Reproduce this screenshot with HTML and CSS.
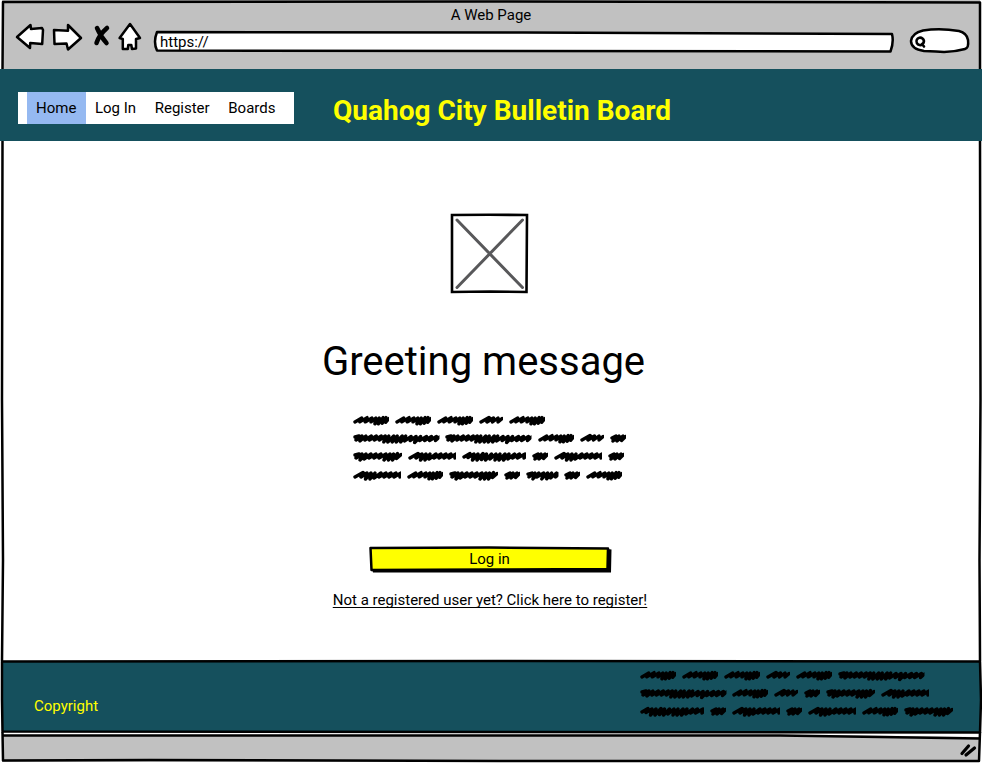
FILE: index.html
```
<!DOCTYPE html>
<html lang="en">
<head>
<meta charset="utf-8">
<title>Quahog City Bulletin Board</title>
<link rel="stylesheet" href="styles.css">
</head>
<body>
<svg class="defs" aria-hidden="true">
  <symbol id="a" viewBox="0 0 37 14"><path d="M2 9l7-4-2 4 7.500-4.500-2 4.500 7-4-1 4 5-4-1 6 4.500-6-1 6 5-6.500-1 6 4-6-.5 5 3.500-4"/></symbol>
  <symbol id="b" viewBox="0 0 24 14"><path d="M2 9l8-4.500 1 1-3 3.500 6.500-4-1 4 5.500-4 0 4 4-3.500"/></symbol>
  <symbol id="c" viewBox="0 0 87 14"><path d="M2 6l4-1-3 4 6-4-2 5 6-5-1 4 6.500-4-2 4 7-4-2 4 7-4-2 4 6-4-1.500 6 5-6-1 6 6-6-1.500 6 5-6-1 6 6-6-1.500 6 5-6-1 5 6.500-4.500-1 4 6-4-1.500 6 6-6-1 4 7-4-2 4 7-4-2 4 7-4-1 4 4-3.500"/></symbol>
  <symbol id="d" viewBox="0 0 16 14"><path d="M2 7l4-2-3 5 6-5-2 5 6-5-1.500 4.500 4-4"/></symbol>
  <symbol id="e" viewBox="0 0 49 14"><path d="M2 6l4-1-3 4 6-4-2 6 6-6-2 5 7-5-2 4 7-4-2 4 7-4-2 4 7-4-2 6 6-6-1.500 6 5-6-1 6 5-6.500-1 5 4.500-4"/></symbol>
  <symbol id="f" viewBox="0 0 48 14"><path d="M2 9l8-4.500 1 1-3 3.500 6-4-1.500 6 5.500-6-1 6 5-6-1 5 7-5-2 4 7-4-2 4 7-4-2 4 7-4-2 4 7-4-1 4 4-3"/></symbol>
  <symbol id="g" viewBox="0 0 64 14"><path d="M2 8l6-3.500-2 4 6-3.500-1.500 6 5.500-6-1 6 6-6.500-1.500 6 5-5.500-1 6 6-6-1.500 5 6-5-1 6 5-6-1 6 6-6-1.500 6 5.500-6-1 5 6.500-5-2 4 7-4-2 4 7.500-4-1 4 4-3.500"/></symbol>
  <symbol id="h" viewBox="0 0 33 14"><path d="M2 6l4-1-3 4 6-4-2 6 6-6-2 4 7-4-2 6 6-6-1 6 5-6-1 5 6-5-1 4 4-3.500"/></symbol>
</svg>

<div class="window">
  <header class="chrome">
    <div class="chrome-title">A Web Page</div>
    <div class="toolbar">
      <svg class="tools" viewBox="0 0 130 34">
        <path class="key" d="M2 17L15.500 5l.5 4 11-1 1 2-.8 14-12-1-.2 5zM39 10l14 .8L53 5l13 13-13 11.500-1.500-6-12 .5z"/>
        <path class="key" d="M115 4L125 18l-4 1 0 9.500-4 .5-.7-4-3 0-.5 4-5 0 0-10-3.200-1z"/>
        <path class="close" d="M82 8Q86 17 91.500 23M92 8Q84 15 81.500 23"/>
      </svg>
      <div class="address">
        <svg viewBox="0 0 742 24" preserveAspectRatio="none"><path d="M4 2L370 2.500 739 4Q741 12 737.500 21.500L4 20.500Q0 12 4 2z"/></svg>
        <span>https://</span>
      </div>
      <svg class="search" viewBox="0 0 62 28"><path class="key" d="M14 3.500Q31 1 50 4q8 2 9 9 1 8-3 9-14 4-29 2.500L15 24Q2 22 2 14 3 6 14 3.500z"/><path class="glass" d="M13.500 11.500a3.700 3.700 0 1 0-3 6.500 3.700 3.700 0 0 0 3-6.500M13 17L15 19.500"/></svg>
    </div>
  </header>

  <div class="banner">
    <nav>
      <a class="active">Home</a><a>Log In</a><a>Register</a><a>Boards</a>
    </nav>
    <h1>Quahog City Bulletin Board</h1>
  </div>

  <main>
    <svg class="picture" viewBox="0 0 78 80"><path class="edge" d="M2 2L39 1.800l38 .2-.5 77L40 78.500 2 79z"/><path class="cross" d="M7 7L72.500 74.500M72.500 7L7 74.500"/></svg>
    <h2>Greeting message</h2>
    <div class="scribble">
      <div><svg class="a"><use href="#a"/></svg><svg class="a"><use href="#a"/></svg><svg class="a"><use href="#a"/></svg><svg class="b"><use href="#b"/></svg><svg class="a"><use href="#a"/></svg></div>
      <div><svg class="c"><use href="#c"/></svg><svg class="c"><use href="#c"/></svg><svg class="a"><use href="#a"/></svg><svg class="b"><use href="#b"/></svg><svg class="d"><use href="#d"/></svg></div>
      <div><svg class="e"><use href="#e"/></svg><svg class="f"><use href="#f"/></svg><svg class="g"><use href="#g"/></svg><svg class="d"><use href="#d"/></svg><svg class="f"><use href="#f"/></svg><svg class="d"><use href="#d"/></svg></div>
      <div><svg class="f"><use href="#f"/></svg><svg class="a"><use href="#a"/></svg><svg class="e"><use href="#e"/></svg><svg class="d"><use href="#d"/></svg><svg class="h"><use href="#h"/></svg><svg class="d"><use href="#d"/></svg><svg class="a"><use href="#a"/></svg></div>
    </div>
    <button class="login">
      <svg viewBox="0 0 243 28"><path class="shade" d="M3 23L239 22 239 3 242.500 3.500 242 26.500 4 26.500z"/><path class="face" d="M1.500 2L120 1.500 239 2.500 238.500 23 120 23.500 2.500 24z"/></svg>
      <span>Log in</span>
    </button>
    <a class="register">Not a registered user yet? Click here to register!</a>
  </main>

  <footer>
    <span>Copyright</span>
    <div class="scribble">
      <div><svg class="a"><use href="#a"/></svg><svg class="a"><use href="#a"/></svg><svg class="a"><use href="#a"/></svg><svg class="b"><use href="#b"/></svg><svg class="a"><use href="#a"/></svg><svg class="c"><use href="#c"/></svg></div>
      <div><svg class="c"><use href="#c"/></svg><svg class="a"><use href="#a"/></svg><svg class="b"><use href="#b"/></svg><svg class="d"><use href="#d"/></svg><svg class="e"><use href="#e"/></svg><svg class="f"><use href="#f"/></svg></div>
      <div><svg class="g"><use href="#g"/></svg><svg class="d"><use href="#d"/></svg><svg class="f"><use href="#f"/></svg><svg class="d"><use href="#d"/></svg><svg class="f"><use href="#f"/></svg><svg class="a"><use href="#a"/></svg><svg class="e"><use href="#e"/></svg></div>
    </div>
  </footer>
  <div class="status"></div>

  <svg class="frame" viewBox="0 0 982 763">
    <path class="gap" d="M790 734.500L979 734.500 979 737z"/>
    <path d="M2.500 69L3 2 490 1.500 980 2.500 980 69M2.500 141L2 400 3 560 2 661M980 141L980.500 400 979.500 560 980 661"/>
    <path d="M2 661.500L500 661 980 661.500 981 700 980 732.500 500 732 2.500 731.500 2 700z"/>
    <path d="M2.500 732L3 760.500 150 760 500 761 979 761 980 732M3 735.500L500 735.500 780 735.500 980 738.500"/>
    <path class="grip" d="M962 753.500L968.500 746M966 755L974.500 748"/>
  </svg>
</div>
</body>
</html>
```
FILE: styles.css
```
* { box-sizing: border-box; }
body { margin: 0; background: #fff; font: 15px/18px Roboto, sans-serif; color: #000; }
svg { display: block; flex: none; overflow: visible; }
.defs { position: absolute; width: 0; height: 0; }
.window { position: relative; width: 982px; height: 763px; display: flex; flex-direction: column; overflow: hidden; }
.frame { position: absolute; inset: 0; width: 982px; height: 763px; pointer-events: none; fill: none; stroke: #000; stroke-width: 2.5; stroke-linejoin: round; }
.frame .gap { fill: #fff; stroke: none; }
.frame .grip { stroke-width: 3.2; stroke-linecap: round; }

.chrome { height: 69px; margin: 0 2px; padding-top: 6px; background: #c1c1c1; }
.chrome-title { text-align: center; }
.toolbar { display: flex; padding-left: 13px; }
.tools { width: 130px; height: 34px; margin-top: -4px; }
.key { fill: #fff; stroke: #000; stroke-width: 2.5; stroke-linejoin: round; }
.close { fill: none; stroke: #000; stroke-width: 4.5; stroke-linecap: round; }
.address { position: relative; width: 742px; height: 24px; margin: 6px 0 0 8px; padding: 3px 7px; }
.address svg { position: absolute; inset: 0; width: 742px; height: 24px; fill: #fff; stroke: #000; stroke-width: 2.5; stroke-linejoin: round; }
.address span { position: relative; }
.search { width: 62px; height: 28px; margin: 3px 0 0 14px; }
.glass { fill: none; stroke: #000; stroke-width: 2.6; stroke-linecap: round; }

.banner { height: 72px; background: #15505d; display: flex; align-items: flex-start; padding: 23px 0 0 18px; }
nav { display: flex; width: 276px; height: 32px; padding-left: 9px; background: #fff; }
nav a { padding: 7px 9.6px 7px 9px; white-space: nowrap; }
nav .active { background: #95b9f1; }
h1 { margin: 2px 0 0 39px; font-size: 28px; line-height: 34px; font-weight: 700; color: #ff0; white-space: nowrap; }

main { height: 520px; display: flex; flex-direction: column; align-items: center; padding-top: 72px; }
.picture { width: 78px; height: 80px; margin-right: 4px; }
.edge { fill: #fff; stroke: #000; stroke-width: 2.6; }
.cross { stroke: #58585a; stroke-width: 3; stroke-linecap: round; }
h2 { margin: 45px 15px 0 0; font-size: 40px; line-height: 48px; font-weight: 400; white-space: nowrap; }
.scribble { display: flex; flex-direction: column; gap: 4.2px; }
.scribble div { display: flex; gap: 6px; height: 14px; }
.scribble svg { height: 14px; fill: none; stroke: #000; stroke-width: 3.4; stroke-linecap: round; stroke-linejoin: round; }
main .scribble { width: 277px; margin-top: 27px; }
.scribble .a { width: 36px; }
.scribble .b { width: 24px; }
.scribble .c { width: 86.5px; }
.scribble .d { width: 16px; }
.scribble .e { width: 49px; }
.scribble .f { width: 48px; }
.scribble .g { width: 64px; }
.scribble .h { width: 32.5px; }
.login { position: relative; width: 243px; height: 28px; margin: 64px 1px 0 0; padding: 0 2px 2px 0; border: 0; background: none; font: inherit; color: #000; }
.login svg { position: absolute; inset: 0; width: 243px; height: 28px; }
.login span { position: relative; }
.shade { fill: #000; }
.face { fill: #ff0; stroke: #000; stroke-width: 2.5; stroke-linejoin: round; }
.register { margin: 17px 2px 0 0; text-decoration: underline; text-underline-offset: 2px; text-decoration-thickness: 1px; text-decoration-skip-ink: none; }

footer { height: 71px; margin: 0 2px; background: #15505d; display: flex; justify-content: space-between; padding: 7px 23px 0 32px; color: #ff0; }
footer span { margin-top: 29px; }
footer .scribble { width: 317.5px; }
.status { height: 27px; margin: 3px 2px 0; background: #c1c1c1; }
```
